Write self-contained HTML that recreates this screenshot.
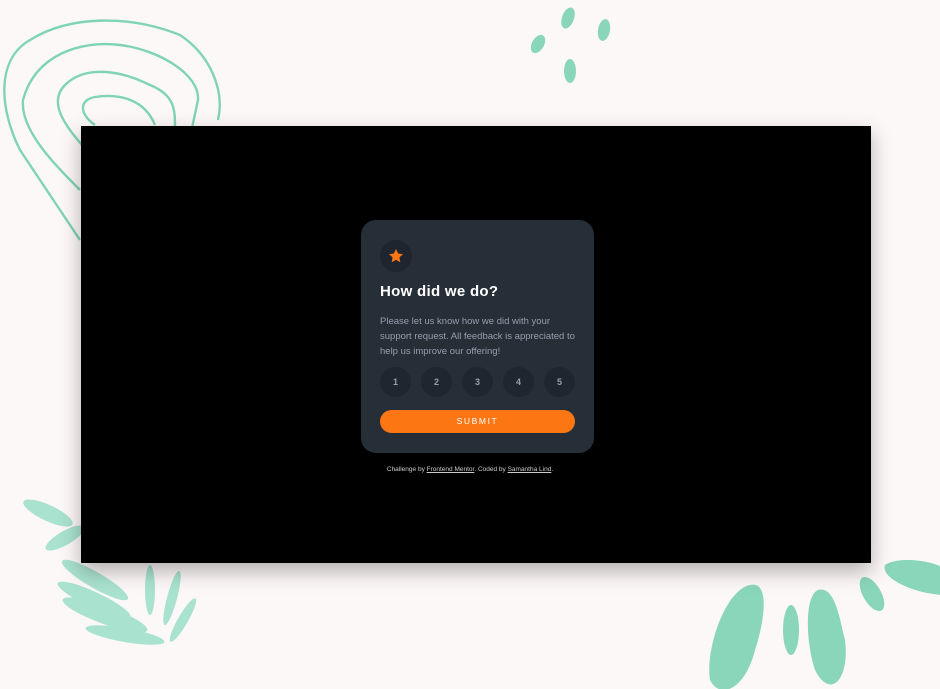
<!DOCTYPE html>
<html><head><style>
*{margin:0;padding:0;box-sizing:border-box}
body{width:940px;height:689px;background:#fdf8f8;position:relative;overflow:hidden;font-family:"Liberation Sans",sans-serif}
svg.deco{position:absolute;left:0;top:0}
#frame{position:absolute;left:81px;top:126px;width:790px;height:437px;background:#000;box-shadow:0 8px 20px rgba(0,0,0,.3)}
#card{position:absolute;left:361px;top:220px;width:233px;height:233px;background:#262e38;border-radius:15px}
.star{position:absolute;left:19px;top:20px;width:32px;height:32px;border-radius:50%;background:#1f252e}
h1{position:absolute;left:19px;top:63px;color:#fff;font-size:15px;font-weight:bold;letter-spacing:.3px}
p.d{position:absolute;left:19px;top:94px;width:196px;color:#969fad;font-size:9.5px;line-height:15px}
.n{position:absolute;top:147px;width:31px;height:30px;border-radius:50%;background:#1f262f;color:#969fad;font-size:9px;font-weight:bold;text-align:center;line-height:30px}
.btn{position:absolute;left:19px;top:190px;width:195px;height:23px;border-radius:12px;background:#fc7614;color:#fff;font-size:8.5px;letter-spacing:1.6px;text-align:center;line-height:23px}
.foot{position:absolute;left:0;width:940px;top:466px;text-align:center;color:#ccc;font-size:6.5px}
.foot u{color:#ccc}
</style></head><body>
<svg class="deco" width="940" height="689" viewBox="0 0 940 689">
<g fill="none" stroke="#7fd4b4" stroke-width="2.4">
<path d="M80 240 C60 210 40 180 20 150 C0 110 -5 60 30 40 C70 15 130 15 180 35 C210 55 225 90 218 120"/>
<path d="M80 190 C55 165 20 130 23 100 C35 55 80 40 120 45 C160 50 200 75 198 100 L192 128"/>
<path d="M82 145 C60 120 50 100 65 85 C85 65 120 70 150 85 C175 95 175 110 175 128"/>
<path d="M95 125 C80 115 78 100 95 97 C120 93 145 100 155 125"/>
</g>
<g fill="#8ad6bb">
<ellipse cx="538" cy="44" rx="6" ry="10" transform="rotate(30 538 44)"/>
<ellipse cx="568" cy="18" rx="6" ry="11" transform="rotate(20 568 18)"/>
<ellipse cx="604" cy="30" rx="6" ry="11" transform="rotate(10 604 30)"/>
<ellipse cx="570" cy="71" rx="6" ry="12"/>
<path d="M750 585 C770 580 765 620 755 650 C745 690 720 700 710 680 C705 650 725 590 750 585Z"/>
<ellipse cx="791" cy="630" rx="8" ry="25"/>
<path d="M818 590 C835 585 840 620 845 640 C850 680 830 700 815 670 C805 640 805 595 818 590Z"/>
<ellipse cx="872" cy="594" rx="9" ry="19" transform="rotate(-30 872 594)"/>
<path d="M885 565 C900 555 940 562 945 570 L945 595 C920 595 880 580 885 565Z"/>
</g>
<g fill="#a9e2cf">
<ellipse cx="48" cy="513" rx="27" ry="8" transform="rotate(25 48 513)"/>
<ellipse cx="65" cy="538" rx="22" ry="7" transform="rotate(-30 65 538)"/>
<ellipse cx="95" cy="580" rx="38" ry="8" transform="rotate(30 95 580)"/>
<ellipse cx="105" cy="615" rx="45" ry="9" transform="rotate(20 105 615)"/>
<ellipse cx="125" cy="635" rx="40" ry="7" transform="rotate(10 125 635)"/>
<ellipse cx="94" cy="600" rx="40" ry="8" transform="rotate(25 94 600)"/>
<ellipse cx="172" cy="598" rx="5" ry="28" transform="rotate(15 172 598)"/>
<ellipse cx="183" cy="620" rx="5" ry="25" transform="rotate(30 183 620)"/>
<ellipse cx="150" cy="590" rx="5" ry="25"/>
</g>
</svg>
<div id="frame"></div>
<div id="card">
<div class="star"><svg width="32" height="32" viewBox="0 0 32 32"><path fill="#fc7614" d="M16 9l2.1 4.5 4.9.6-3.6 3.3.9 4.9L16 19.9l-4.3 2.4.9-4.9-3.6-3.3 4.9-.6z"/></svg></div>
<h1>How did we do?</h1>
<p class="d">Please let us know how we did with your support request. All feedback is appreciated to help us improve our offering!</p>
<div class="n" style="left:19px">1</div>
<div class="n" style="left:60px">2</div>
<div class="n" style="left:101px">3</div>
<div class="n" style="left:142px">4</div>
<div class="n" style="left:183px">5</div>
<div class="btn">SUBMIT</div>
</div>
<div class="foot">Challenge by <u>Frontend Mentor</u>. Coded by <u>Samantha Lind</u>.</div>
</body></html>
